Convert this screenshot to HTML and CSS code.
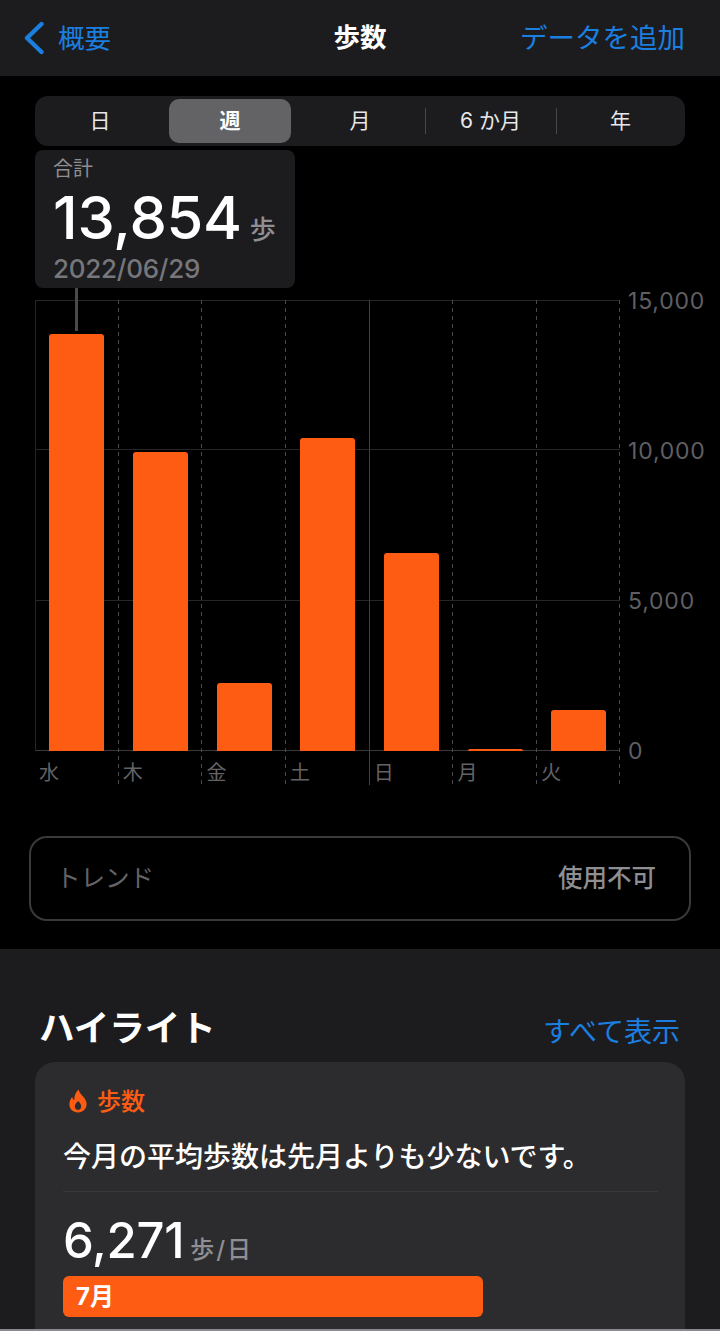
FILE: index.html
```html
<!DOCTYPE html>
<html lang="ja">
<head>
<meta charset="utf-8">
<title>歩数</title>
<link rel="stylesheet" href="styles.css">
</head>
<body>
<div class="page">
  <header class="nav">
    <div class="nav-back">
      <svg class="chevron" viewBox="0 0 22 34" aria-hidden="true"><path d="M18.5 3 L4 17 L18.5 31"/></svg>
      <span>概要</span>
    </div>
    <div class="nav-title">歩数</div>
    <div class="nav-action">データを追加</div>
  </header>
  <main class="main">
    <div class="segments">
      <div class="seg">日</div>
      <div class="seg seg-on">週</div>
      <div class="seg">月</div>
      <div class="seg seg-rule">6 か月</div>
      <div class="seg seg-rule">年</div>
    </div>
    <div class="bubble">
      <div class="bubble-label">合計</div>
      <div class="bubble-value"><span class="bubble-num">13,854</span><span class="bubble-unit">歩</span></div>
      <div class="bubble-date">2022/06/29</div>
    </div>
    <div class="chart">
      <div class="plot">
        <div class="hline hline-0"></div>
        <div class="hline hline-1"></div>
        <div class="hline hline-2"></div>
        <div class="hline hline-3"></div>
        <div class="leader"></div>
        <div class="col col-first"><div class="area"><div class="bar" style="height:92.4%"></div></div><div class="day">水</div></div>
        <div class="col"><div class="area"><div class="bar" style="height:66.2%"></div></div><div class="day">木</div></div>
        <div class="col"><div class="area"><div class="bar" style="height:15.1%"></div></div><div class="day">金</div></div>
        <div class="col"><div class="area"><div class="bar" style="height:69.4%"></div></div><div class="day">土</div></div>
        <div class="col col-solid"><div class="area"><div class="bar" style="height:43.8%"></div></div><div class="day">日</div></div>
        <div class="col"><div class="area"><div class="bar" style="height:0.45%"></div></div><div class="day">月</div></div>
        <div class="col col-last"><div class="area"><div class="bar" style="height:9.1%"></div></div><div class="day">火</div></div>
      </div>
      <div class="axis">
        <span>15,000</span>
        <span>10,000</span>
        <span>5,000</span>
        <span>0</span>
      </div>
    </div>
    <div class="trend">
      <span class="trend-label">トレンド</span>
      <span class="trend-value">使用不可</span>
    </div>
  </main>
  <section class="highlights">
    <div class="hl-head">
      <h2 class="hl-title">ハイライト</h2>
      <span class="hl-link">すべて表示</span>
    </div>
    <article class="card">
      <div class="card-tag">
        <svg class="flame" viewBox="0 0 18 24" aria-hidden="true"><path fill-rule="evenodd" d="M9.6 0.6 C10.2 3.6 12 5.2 14 7.4 C16.2 9.8 17.6 12.2 17.6 15 C17.6 20 13.9 23.4 9 23.4 C4 23.4 0.4 20 0.4 15.2 C0.4 12.4 1.5 10 3.2 8 C3.6 9.6 4.2 10.6 5.2 11.2 C5.2 7.2 6.6 3.2 9.6 0.6 Z M9.2 12 C7.4 13.8 5.8 15.4 5.8 17.4 C5.8 19.4 7.2 20.8 9 20.8 C10.8 20.8 12.2 19.4 12.2 17.4 C12.2 15.4 10.8 13.8 9.2 12 Z"/></svg>
        <span>歩数</span>
      </div>
      <p class="card-text">今月の平均歩数は先月よりも少ないです。</p>
      <div class="card-rule"></div>
      <div class="stat"><span class="stat-num">6,271</span><span class="stat-unit">歩/日</span></div>
      <div class="month-bar">7月</div>
    </article>
  </section>
  <div class="edge"></div>
</div>
</body>
</html>
```
FILE: styles.css
```css
* { box-sizing: border-box; }
html, body { margin: 0; padding: 0; background: #000; }
body {
  font-family: "Inter", "Noto Sans CJK JP", sans-serif;
  color: #fff;
}
.page {
  width: 720px;
  height: 1331px;
  overflow: hidden;
  display: flex;
  flex-direction: column;
  position: relative;
}

/* nav */
.nav {
  height: 76px;
  flex: none;
  background: #1c1c1e;
  display: grid;
  grid-template-columns: 1fr auto 1fr;
  align-items: center;
  padding: 0 35px;
}
.nav-back {
  display: flex;
  align-items: center;
  gap: 13px;
  margin-left: -12px;
  color: #1b7fe0;
  font-size: 26.5px;
  line-height: 1;
}
.chevron { width: 22px; height: 34px; flex: none; }
.chevron path { fill: none; stroke: #1b7fe0; stroke-width: 4.4; stroke-linecap: round; stroke-linejoin: round; }
.nav-title { font-size: 26.5px; font-weight: 700; line-height: 1; margin-top: -2px; }
.nav-action { text-align: right; font-size: 27.5px; line-height: 1; margin-top: 1px; color: #1b7fe0; white-space: nowrap; }

/* main */
.main { height: 873px; flex: none; padding: 20px 35px 0; background: #000; }
.segments {
  height: 50px;
  width: 650px;
  background: #1c1c1e;
  border-radius: 13px;
  display: grid;
  grid-template-columns: 130px 130px 130px 131px 129px;
  padding: 3px 0;
}
.seg {
  display: flex;
  align-items: center;
  justify-content: center;
  font-size: 21px;
  line-height: 1;
  padding-bottom: 2px;
  color: #e8e8ea;
  border-radius: 10px;
  position: relative;
}
.seg-on { background: #636366; color: #fff; font-weight: 700; margin: 0 4px; }
.seg-rule::before {
  content: "";
  position: absolute;
  left: 0;
  top: 9px;
  bottom: 9px;
  width: 1px;
  background: #48484a;
}
.bubble {
  margin-top: 4px;
  width: 260px;
  height: 138px;
  background: #1c1c1e;
  border-radius: 8px;
  padding: 6px 18px 0;
}
.bubble-label { font-size: 20px; line-height: 27px; color: #8e8e93; }
.bubble-value { display: flex; align-items: baseline; height: 60px; margin-top: 4px; line-height: 60px; }
.bubble-num { font-size: 59.5px; font-weight: 500; letter-spacing: -0.3px; }
.bubble-unit { font-size: 26px; font-weight: 500; color: #8e8e93; margin-left: 8px; }
.bubble-date { font-size: 26px; font-weight: 500; line-height: 34px; margin-top: 5px; color: #76767b; letter-spacing: -0.25px; }

/* chart */
.chart { display: flex; margin-top: 12px; height: 485px; width: 685px; }
.plot { position: relative; display: grid; grid-template-columns: repeat(7, 83.7px); width: 585px; flex: none; }
.hline { position: absolute; left: 0; width: 585px; height: 1px; background: #262628; }
.hline-0 { top: 0; }
.hline-1 { top: 149px; }
.hline-2 { top: 300px; }
.hline-3 { top: 450px; background: #3a3a3c; }
.leader { position: absolute; left: 40px; top: -12px; width: 3px; height: 43px; background: #4a4a4c; }
.col { display: flex; flex-direction: column; height: 485px; position: relative; }
.col::before {
  content: "";
  position: absolute;
  left: -1px;
  top: 0;
  bottom: 0;
  width: 1px;
  background: repeating-linear-gradient(to bottom, #4a4a4c 0 4px, transparent 4px 8px);
}
.col-last::after {
  content: "";
  position: absolute;
  right: 1px;
  top: 0;
  bottom: 0;
  width: 1px;
  background: repeating-linear-gradient(to bottom, #4a4a4c 0 4px, transparent 4px 8px);
}
.area {
  height: 451px;
  display: flex;
  align-items: flex-end;
  justify-content: center;
  position: relative;
}
.bar { width: 55px; background: #ff5c13; border-radius: 3px 3px 0 0; }
.day {
  height: 34px;
  font-size: 20px;
  color: #636366;
  padding: 9px 0 0 4px;
  line-height: 26px;
}
.col-first::before { left: 0; bottom: 34px; background: #262628; }
.col-solid::before { background: #3f3f41; }

.axis {
  flex: none;
  height: 450px;
  margin-left: 8px;
  display: flex;
  flex-direction: column;
  justify-content: space-between;
  font-size: 23px;
  letter-spacing: 0.8px;
  color: #5f5f63;
}
.axis span { height: 0; line-height: 2px; white-space: nowrap; }

/* trend */
.trend {
  margin: 51px 0 0 -6px;
  width: 662px;
  height: 85px;
  border: 2px solid #3a3a3c;
  border-radius: 18px;
  display: flex;
  align-items: center;
  justify-content: space-between;
  padding: 0 33px 4px 25px;
  font-size: 24.5px;
}
.trend-label { color: #636366; }
.trend-value { color: #8e8e93; font-weight: 500; }

/* highlights */
.highlights { flex: 1; background: #1c1c1e; padding: 0 35px; }
.hl-head { height: 113px; display: flex; align-items: flex-end; justify-content: space-between; padding: 0 5px 10px 4px; }
.hl-title { margin: 0; font-size: 35.5px; line-height: 46px; font-weight: 700; }
.hl-link { font-size: 28px; line-height: 40px; color: #1b7fe0; }
.card {
  background: #2c2c2e;
  border-radius: 20px 20px 0 0;
  height: 300px;
  padding: 0 27px 0 28px;
}
.card-tag {
  display: flex;
  align-items: center;
  gap: 10px;
  height: 28px;
  padding: 0 0 0 6px;
  color: #ff5c13;
  font-size: 24px;
  font-weight: 500;
  position: relative;
  top: 23px;
}
.flame { width: 18px; height: 24px; fill: #ff5c13; flex: none; position: relative; top: 2px; }
.card-text { margin: 0; padding-top: 47px; font-size: 28px; font-weight: 500; line-height: 40px; white-space: nowrap; }
.card-rule { height: 1px; background: #38383a; margin-top: 14px; }
.stat { display: flex; align-items: baseline; height: 64px; margin-top: 17px; line-height: 64px; }
.stat-num { font-size: 49px; font-weight: 500; letter-spacing: -0.3px; }
.stat-unit { font-size: 24px; font-weight: 500; letter-spacing: 2px; color: #8e8e93; margin-left: 6px; }
.month-bar {
  width: 420px;
  height: 41px;
  margin-top: 3px;
  background: #ff5c13;
  border-radius: 6px;
  font-size: 24px;
  font-weight: 700;
  line-height: 41px;
  padding-left: 13px;
}
.edge { position: absolute; left: 0; right: 0; bottom: 0; height: 2px; background: #8a8a8e; }
```
